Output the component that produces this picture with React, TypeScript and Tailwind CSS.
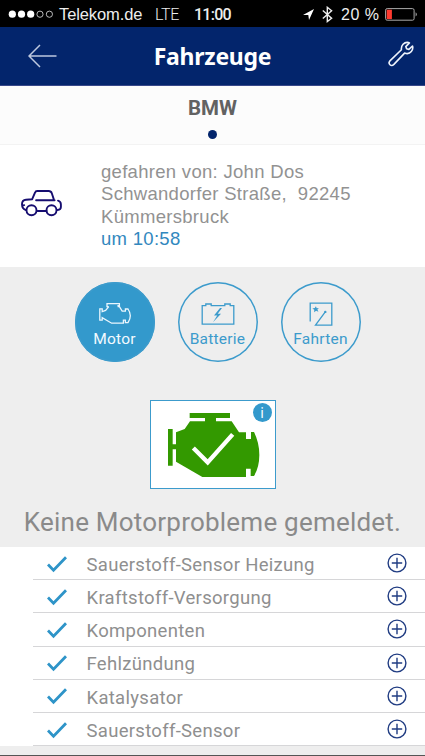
import type { ReactNode } from "react";

const checks = [
  "Sauerstoff-Sensor Heizung",
  "Kraftstoff-Versorgung",
  "Komponenten",
  "Fehlzündung",
  "Katalysator",
  "Sauerstoff-Sensor",
];

const StatusBar = () => (
  <div className="flex h-[27px] items-center bg-black pl-[8px] pr-[7px] pt-[2px] font-['Liberation_Sans',Arial,sans-serif] text-[16px] leading-none text-[#ededed]">
    <svg width="46" height="9" viewBox="0 0 46 9" className="shrink-0">
      <circle cx="4.3" cy="4.2" r="3.6" fill="#fff" />
      <circle cx="13.5" cy="4.2" r="3.6" fill="#fff" />
      <circle cx="22.7" cy="4.2" r="3.6" fill="#fff" />
      <circle cx="32" cy="4.2" r="3.1" fill="none" stroke="#ccc" strokeWidth="0.9" />
      <circle cx="41.4" cy="4.2" r="3.1" fill="none" stroke="#ccc" strokeWidth="0.9" />
    </svg>
    <span className="ml-[5px] w-[96px] whitespace-nowrap text-[16.5px] tracking-[-0.1px]">Telekom.de</span>
    <span className="w-[39px] whitespace-nowrap font-['Roboto',sans-serif] font-light tracking-[-0.3px]">LTE</span>
    <span className="w-[109px] whitespace-nowrap font-['Roboto',sans-serif] font-medium tracking-[-0.75px]">11:00</span>
    <svg width="11" height="11" viewBox="0 0 11 11" className="shrink-0">
      <path d="M0 6 11 0 6 11 5.3 6Z" fill="#fff" />
    </svg>
    <svg width="11" height="17" viewBox="0 0 11 17" className="ml-[8px] shrink-0" fill="none" stroke="#eee" strokeWidth="1.4">
      <path d="M0.8 4.5 9.6 12.3 5.3 15.5V1.3L9.6 4.7 0.8 12.5" />
    </svg>
    <span className="ml-[8px] whitespace-nowrap tracking-[0.5px]">20 %</span>
    <svg width="33" height="13" viewBox="0 0 33 13" className="ml-auto shrink-0">
      <rect x="0.6" y="0.6" width="28.5" height="11.6" rx="1.6" fill="none" stroke="#aaa" />
      <rect x="1.7" y="1.7" width="5.2" height="9.4" fill="#ff3b30" />
      <path d="M30.7 4.2q2 2.2 0 4.4Z" fill="#ccc" />
    </svg>
  </div>
);

const Header = () => (
  <header className="grid h-[59px] grid-cols-[1fr_auto_1fr] items-center border-b border-[#38488a] bg-[#03256c] pl-[28px] pr-[11px]">
    <svg width="30" height="24" viewBox="0 0 30 24" fill="none" stroke="#bdc8df" strokeWidth="1.5">
      <path d="M28.5 12H1M12 1 1 12l11 11" />
    </svg>
    <h1 className="-ml-[17px] font-['Noto_Sans',sans-serif] text-[23px] font-bold leading-none tracking-[-0.25px] text-white">
      Fahrzeuge
    </h1>
    <svg width="26" height="26" viewBox="0 0 26 26" className="-mt-[5px] justify-self-end" fill="none" stroke="#eef3fb" strokeWidth="1.6" strokeLinejoin="round">
      <path d="M13.4 8.7C12.9 4.5 16 .8 20.4 1.5l1 .4-3.6 3.7.8 2.2 2.3.6 3.6-3.4c1.2 4-2.2 8.4-6.5 7.5l-1.4-.4L5.9 23.4c-2.8 2.8-6.3-.8-4-3.5L13.4 8.7Z" />
    </svg>
  </header>
);

const CarIcon = () => (
  <svg width="41" height="27" viewBox="0 0 41 27" fill="none" stroke="#160d70" strokeWidth="1.9" strokeLinecap="round" strokeLinejoin="round">
    <path d="M5 20.2C2.3 19.2 1 17.2 1 14.2c0-2.8 1.2-4.3 4-4.5l6.2-.5L14 2.7C14.4 1.6 15 1 16.2 1h11.4c1.8 0 2.7.7 3.2 2.2l2 6.2M15.1 10.2h18.5M37 10.6c2 .5 2.9 1.7 2.9 3.9v2.6c0 1.9-1.3 2.8-3.3 2.9M16.5 21h9M1.4 15.6l1.8-.5" />
    <circle cx="10.5" cy="20.2" r="5" />
    <circle cx="30.5" cy="20.2" r="5" />
  </svg>
);

const MotorIcon = () => (
  <svg width="34" height="24" viewBox="0 0 34 24" fill="none" stroke="#eaf6fd" strokeWidth="1.3">
    <path d="M10.8 4.6H9V1.6h12.4v3H19.6M10.8 4.6 7.6 8.4 4.2 9.6V6.8H1.8v11.4h2.4v-2.6l9.4 5.6h11.8v-3h2v2.4h2.6c2.8-4.2 2.8-9.6 0-13.6h-2.6v2.2h-3.2l-3.4-5.6h-1.4" />
  </svg>
);

const BatterieIcon = () => (
  <svg width="34" height="24" viewBox="0 0 34 24" fill="none" stroke="#3c9bcc" strokeWidth="1.3">
    <path d="M1.2 3.6h3.6V2h5.4v1.6h13.6V2h5.4v1.6h3.6v18.6H1.2Z" />
    <path d="m19 6-6 7.4h3.2L12 20.2l8-8.4h-3.3L21 6Z" fill="#3c9bcc" stroke="none" />
  </svg>
);

const FahrtenIcon = () => (
  <svg width="24" height="24" viewBox="0 0 24 24" fill="none" stroke="#3c9bcc" strokeWidth="1.3">
    <path d="M1.2 19.5V1.2h21.6v22H6.5l9.6-13" />
    <path d="m6.9 4.2.8 2 2.2-.2-1.5 1.6 1 2.1-2.3-.9-2 1.5.2-2.5-2-1.3 2.5-.4Z" fill="#3c9bcc" stroke="none" />
    <circle cx="16.3" cy="9.9" r="1.2" fill="#3c9bcc" stroke="none" />
  </svg>
);

type TabProps = { label: string; active?: boolean; children: ReactNode };

const Tab = ({ label, active, children }: TabProps) => (
  <button
    className={`flex h-[80px] w-[80px] flex-col items-center rounded-full pt-[20px] font-['Roboto',sans-serif] text-[15.5px] leading-[22px] tracking-[0.25px] inset-ring-[1.5px] inset-ring-[#3c9bcc] ${
      active ? "bg-[#3399cc] text-[#f2faff]" : "text-[#3c9bcc]"
    }`}
  >
    {children}
    <span className="mt-[2px]">{label}</span>
  </button>
);

const EngineCard = () => (
  <div className="relative h-[89px] w-[126px] border border-[#3c9bcc] bg-white">
    <svg width="124" height="87" viewBox="33 33 372 261">
      <path
        d="M149 69H270V84H228V94H275L297 127H318V147H333V126H342Q358 158 358 195T342 258H332V236H318V261H187L108 215V178H98V227H84V117H98V163H108V127L134 117L150 94H195V84H149Z"
        fill="#339900"
      />
      <path d="M160 174 203 217 278 133" fill="none" stroke="#fff" strokeWidth="13" />
    </svg>
    <span className="absolute right-[3px] top-[2px] flex h-[19px] w-[19px] items-center justify-center rounded-full bg-[#3399cc] font-['Noto_Sans',sans-serif] text-[14px] leading-none text-white">
      i
    </span>
  </div>
);

const CheckRow = ({ label }: { label: string }) => (
  <li className="flex h-[33.2px] items-center border-b border-[#d6d6d8] pl-[14px] pr-[18px] pt-[2px]">
    <svg width="20" height="17" viewBox="0 0 20 17" className="shrink-0" fill="none" stroke="#2e94c8" strokeWidth="2.8">
      <path d="M1 8.6 6.5 14.2 19 1.2" />
    </svg>
    <span className="ml-[19.5px] flex-1 whitespace-nowrap pt-[2px]">{label}</span>
    <svg width="20" height="20" viewBox="0 0 20 20" className="-mt-[2px]" fill="none" stroke="#203c82" strokeWidth="1.4">
      <circle cx="10" cy="10" r="8.9" />
      <path d="M10 4.8v10.4M4.8 10h10.4" />
    </svg>
  </li>
);

const App = () => {
  return (
    <div className="flex h-[756px] w-[425px] flex-col overflow-hidden bg-[#eeeeee]">
      <StatusBar />
      <Header />
      <div className="flex h-[59px] flex-col items-center border-b border-[#f3f3f3] bg-[#fcfcfc] pt-[10px]">
        <span className="font-['Roboto',sans-serif] text-[20.5px] font-bold leading-[25px] text-[#626262]">BMW</span>
        <span className="mt-[9px] h-[9px] w-[9px] rounded-full bg-[#03256c]" />
      </div>
      <div className="flex h-[122px] bg-white">
        <div className="w-[101px] pl-[21px] pt-[45px]">
          <CarIcon />
        </div>
        <div className="pt-[16px] font-['Liberation_Sans',Arial,sans-serif] text-[18.5px] leading-[22.3px] tracking-[0.3px] text-[#929292]">
          <p>gefahren von: John Dos</p>
          <p>Schwandorfer Straße,&nbsp; 92245</p>
          <p>Kümmersbruck</p>
          <p className="text-[#3288be]">um 10:58</p>
        </div>
      </div>
      <div className="flex flex-col items-center">
        <div className="flex gap-[23px] pl-[10px] pt-[15px]">
          <Tab label="Motor" active>
            <MotorIcon />
          </Tab>
          <Tab label="Batterie">
            <BatterieIcon />
          </Tab>
          <Tab label="Fahrten">
            <FahrtenIcon />
          </Tab>
        </div>
        <div className="pt-[38px]">
          <EngineCard />
        </div>
        <h2 className="flex h-[58px] items-center whitespace-nowrap pt-[8px] font-['Roboto',sans-serif] text-[26px] leading-none tracking-[0.22px] text-[#8a8a8a]">
          Keine Motorprobleme gemeldet.
        </h2>
      </div>
      <div className="bg-white pl-[33px]">
        <ul className="font-['Roboto',sans-serif] text-[18.5px] leading-none tracking-[0.3px] text-[#8f8f8f]">
          {checks.map((label) => (
            <CheckRow key={label} label={label} />
          ))}
        </ul>
      </div>
      <div className="mt-auto h-px bg-[#555555]" />
    </div>
  );
};

export default App;
